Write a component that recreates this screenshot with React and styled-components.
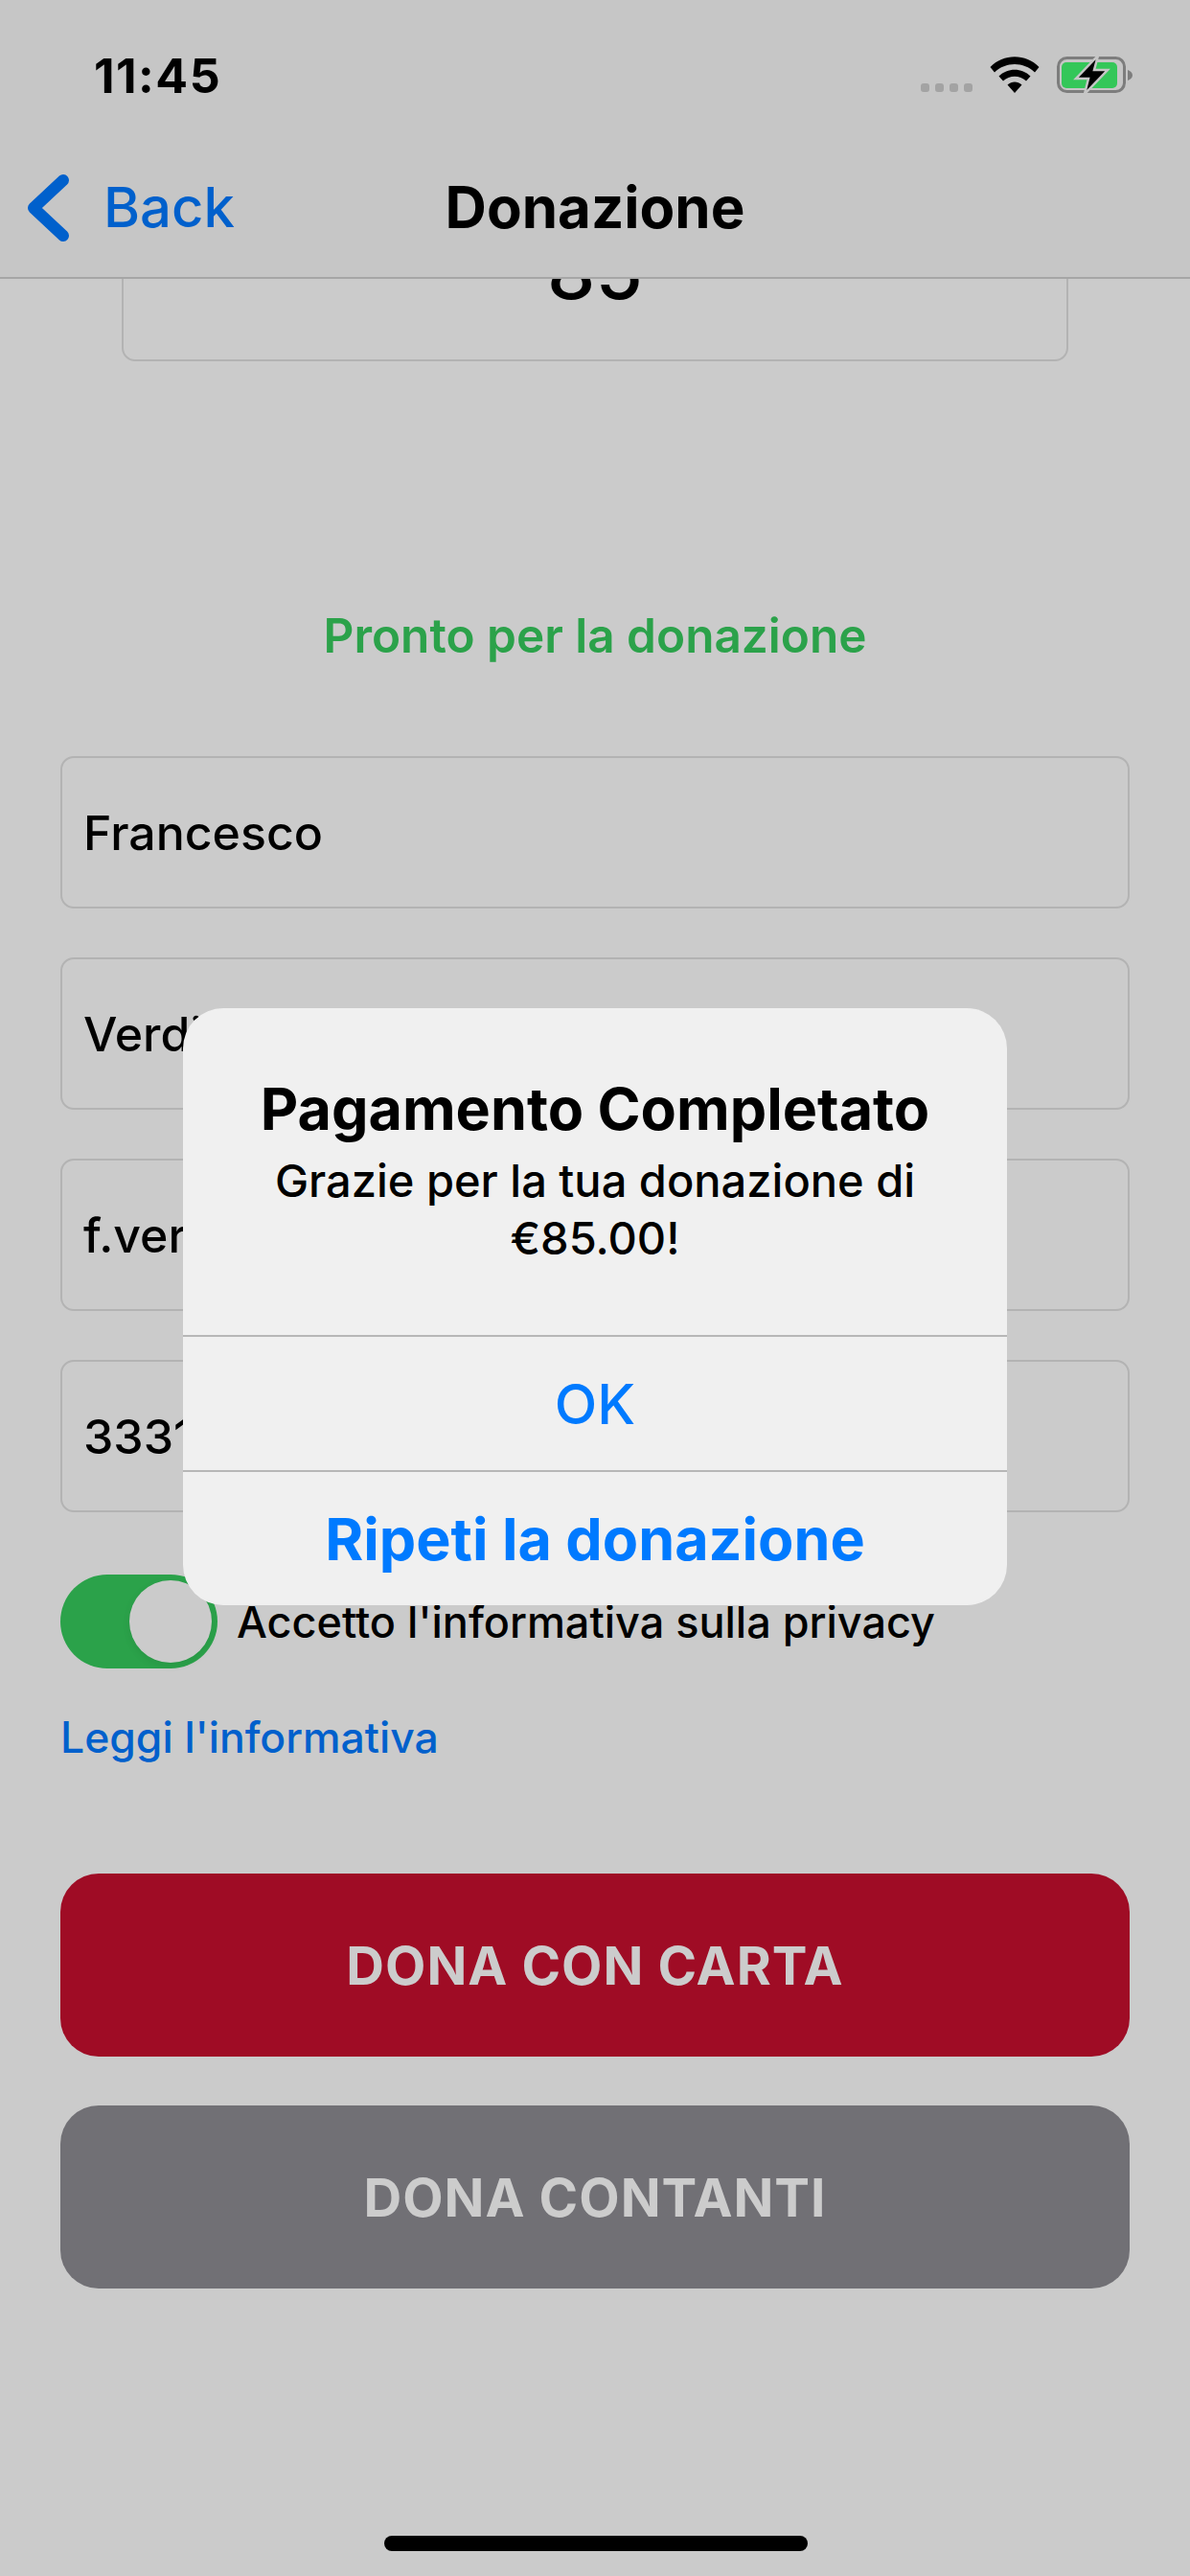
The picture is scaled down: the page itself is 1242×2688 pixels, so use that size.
import styled, { createGlobalStyle } from "styled-components";

const GlobalStyle = createGlobalStyle`
  html, body {
    margin: 0;
    padding: 0;
    background: #cbcbcb;
  }
  * {
    box-sizing: border-box;
  }
`;

const fields = ["Francesco", "Verdi", "f.verdi@gmail.com", "3331234567"];

const WifiIcon = () => (
  <svg width="52" height="39" viewBox="0 0 52 39">
    <path d="M0.5 12 C14 -2.5 38 -2.5 51.5 12 L47 17.5 C35.5 6 16.5 6 5 17.5 Z" fill="#000" />
    <path d="M9.5 21.5 C18.5 12.5 33.5 12.5 42.5 21.5 L38 26.5 C31.5 20 20.5 20 14 26.5 Z" fill="#000" />
    <path d="M18.5 30.5 C23 26.5 29 26.5 33.5 30.5 L26 39 Z" fill="#000" />
  </svg>
);

const BatteryIcon = () => (
  <svg width="80" height="40" viewBox="0 0 80 40">
    <rect x="1.5" y="2.5" width="69" height="35" rx="9" fill="none" stroke="#7d7d7d" strokeWidth="3" />
    <rect x="5" y="7" width="58" height="27" rx="5" fill="#34c759" />
    <path d="M74 15 C77 16 79 18 79 20.5 C79 23 77 25 74 26 Z" fill="#7d7d7d" />
    <path d="M43 0 L20 24 L33 24 L29 40 L53 15 L39 15 Z" fill="#000" stroke="#c6c6c6" strokeWidth="2.5" />
  </svg>
);

const BackChevron = () => (
  <svg width="48" height="72" viewBox="0 0 48 72">
    <path d="M40 8 L9 37 L40 66" fill="none" stroke="#0060cc" strokeWidth="12" strokeLinecap="round" strokeLinejoin="round" />
  </svg>
);

const App = () => {
  return (
    <Screen>
      <GlobalStyle />
      <Header>
        <StatusBar>
          <Time>11:45</Time>
          <StatusIcons>
            <Signal>
              <Dot />
              <Dot />
              <Dot />
              <Dot />
            </Signal>
            <WifiIcon />
            <BatteryIcon />
          </StatusIcons>
        </StatusBar>
        <NavBar>
          <BackLink>
            <BackChevron />
            <span>Back</span>
          </BackLink>
          <NavTitle>Donazione</NavTitle>
        </NavBar>
      </Header>

      <Content>
        <AmountBox>85</AmountBox>
        <Status>Pronto per la donazione</Status>
        <Fields>
          {fields.map((value) => (
            <Field key={value}>{value}</Field>
          ))}
        </Fields>
        <PrivacyRow>
          <Switch>
            <Thumb />
          </Switch>
          <PrivacyText>Accetto l'informativa sulla privacy</PrivacyText>
        </PrivacyRow>
        <ReadLink>Leggi l'informativa</ReadLink>
        <Buttons>
          <ActionButton $bg="#9f0c25">DONA CON CARTA</ActionButton>
          <ActionButton $bg="#717075">DONA CONTANTI</ActionButton>
        </Buttons>
      </Content>

      <Dialog>
        <DialogBody>
          <DialogTitle>Pagamento Completato</DialogTitle>
          <DialogMessage>
            Grazie per la tua donazione di
            <br />
            €85.00!
          </DialogMessage>
        </DialogBody>
        <DialogAction>OK</DialogAction>
        <DialogAction $bold>Ripeti la donazione</DialogAction>
      </Dialog>

      <HomeBar />
    </Screen>
  );
};

export default App;

const Screen = styled.div`
  position: relative;
  width: 1242px;
  height: 2688px;
  overflow: hidden;
  background: #cbcbcb;
  font-family: Inter, "Liberation Sans", sans-serif;
  color: #000;
`;

const Header = styled.header`
  position: absolute;
  top: 0;
  left: 0;
  right: 0;
  height: 291px;
  background: #c6c6c6;
  border-bottom: 2px solid #a6a6a6;
  z-index: 2;
`;

const StatusBar = styled.div`
  height: 174px;
  display: flex;
  align-items: flex-start;
  justify-content: space-between;
  padding: 51px 59px 0 98px;
`;

const Time = styled.div`
  font-size: 50px;
  line-height: 56px;
  font-weight: 700;
  letter-spacing: 1.5px;
`;

const StatusIcons = styled.div`
  display: flex;
  align-items: flex-start;
  gap: 18px;
  margin-top: 7px;
`;

const Signal = styled.div`
  display: flex;
  gap: 6px;
  margin-top: 29px;
`;

const Dot = styled.span`
  width: 9px;
  height: 9px;
  border-radius: 3px;
  background: #a3a3a3;
`;

const NavBar = styled.div`
  position: relative;
  height: 84px;
  display: flex;
  align-items: center;
  justify-content: center;
`;

const BackLink = styled.div`
  position: absolute;
  left: 26px;
  top: 0;
  bottom: 0;
  display: flex;
  align-items: center;
  gap: 34px;
  font-size: 58px;
  font-weight: 500;
  color: #0060cc;
`;

const NavTitle = styled.div`
  font-size: 60px;
  font-weight: 700;
`;

const Content = styled.main`
  padding: 218px 63px 0;
`;

const AmountBox = styled.div`
  width: 988px;
  height: 159px;
  margin: 0 auto;
  padding-bottom: 30px;
  display: flex;
  align-items: center;
  justify-content: center;
  border: 2px solid #b3b3b3;
  border-radius: 14px;
  font-size: 80px;
  font-weight: 500;
`;

const Status = styled.div`
  margin-top: 254px;
  text-align: center;
  font-size: 49.5px;
  line-height: 64px;
  font-weight: 600;
  color: #2ba24a;
`;

const Fields = styled.div`
  margin-top: 94px;
  display: flex;
  flex-direction: column;
  gap: 51px;
`;

const Field = styled.div`
  height: 159px;
  display: flex;
  align-items: center;
  padding: 0 22px;
  border: 2px solid #b3b3b3;
  border-radius: 14px;
  font-size: 50px;
  font-weight: 500;
`;

const PrivacyRow = styled.div`
  margin-top: 65px;
  display: flex;
  align-items: center;
  gap: 20px;
`;

const Switch = styled.div`
  width: 164px;
  height: 98px;
  padding: 6px;
  display: flex;
  justify-content: flex-end;
  border-radius: 49px;
  background: #2ba24a;
`;

const Thumb = styled.span`
  width: 86px;
  height: 86px;
  border-radius: 50%;
  background: #cbcbcb;
  box-shadow: 0 3px 8px rgba(0, 0, 0, 0.08);
`;

const PrivacyText = styled.div`
  font-size: 45px;
  font-weight: 500;
`;

const ReadLink = styled.div`
  margin-top: 44px;
  font-size: 44.5px;
  font-weight: 500;
  line-height: 56px;
  color: #0060cc;
`;

const Buttons = styled.div`
  margin-top: 114px;
  display: flex;
  flex-direction: column;
  gap: 51px;
`;

const ActionButton = styled.div`
  height: 191px;
  display: flex;
  align-items: center;
  justify-content: center;
  border-radius: 40px;
  background: ${(p) => p.$bg};
  color: #cccccc;
  font-size: 55px;
  font-weight: 700;
  letter-spacing: 1px;
`;

const Dialog = styled.div`
  position: absolute;
  left: 191px;
  top: 1052px;
  width: 860px;
  height: 623px;
  display: flex;
  flex-direction: column;
  border-radius: 42px;
  background: #f0f0f0;
  z-index: 3;
`;

const DialogBody = styled.div`
  height: 341px;
  padding-top: 73px;
  text-align: center;
`;

const DialogTitle = styled.div`
  font-size: 61px;
  line-height: 64px;
  font-weight: 700;
`;

const DialogMessage = styled.div`
  margin-top: 13px;
  font-size: 47px;
  line-height: 60px;
  font-weight: 500;
`;

const DialogAction = styled.div`
  flex: 1;
  display: flex;
  align-items: center;
  justify-content: center;
  border-top: 2px solid #b7b7b7;
  color: #007aff;
  font-size: ${(p) => (p.$bold ? "61px" : "58px")};
  font-weight: ${(p) => (p.$bold ? 700 : 500)};
`;

const HomeBar = styled.div`
  position: absolute;
  left: 401px;
  bottom: 26px;
  width: 442px;
  height: 16px;
  border-radius: 8px;
  background: #000;
`;
